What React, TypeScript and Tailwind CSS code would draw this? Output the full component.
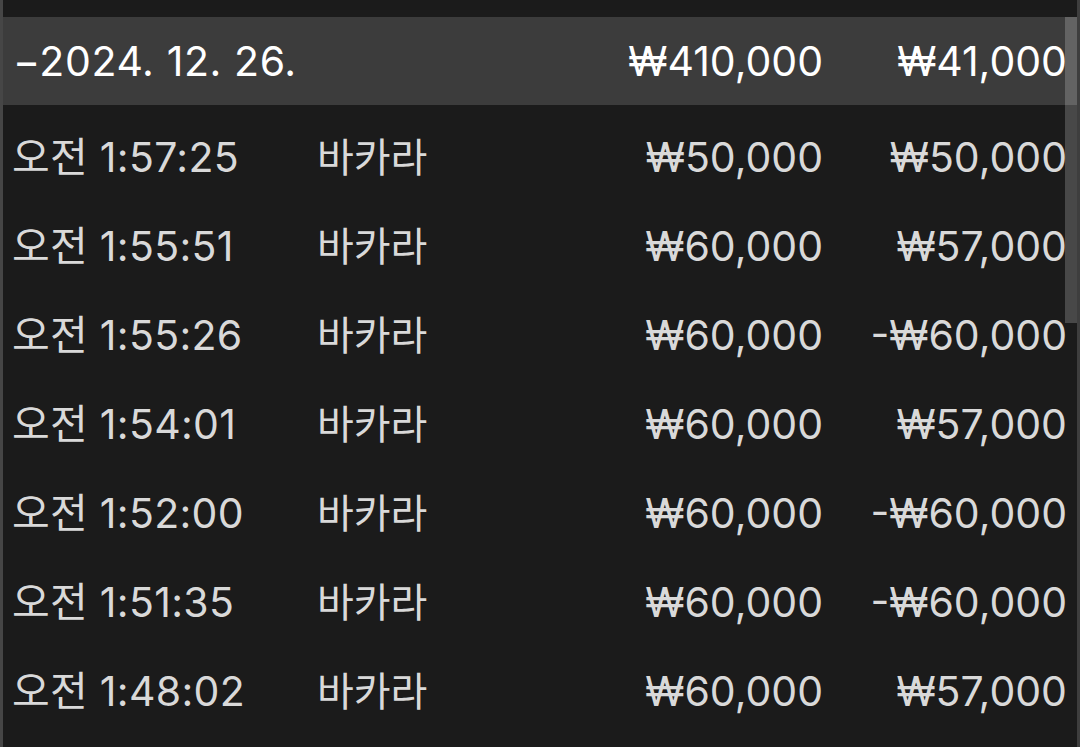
import React from "react";

const rows = [
  { t: "오전 1:57:25", a: "₩50,000", p: "₩50,000" },
  { t: "오전 1:55:51", a: "₩60,000", p: "₩57,000" },
  { t: "오전 1:55:26", a: "₩60,000", p: "-₩60,000" },
  { t: "오전 1:54:01", a: "₩60,000", p: "₩57,000" },
  { t: "오전 1:52:00", a: "₩60,000", p: "-₩60,000" },
  { t: "오전 1:51:35", a: "₩60,000", p: "-₩60,000" },
  { t: "오전 1:48:02", a: "₩60,000", p: "₩57,000" },
];

export default function App() {
  return (
    <div
      className="w-[1080px] h-[747px] bg-[#1b1b1b] flex overflow-hidden"
      style={{ fontFamily: '"Inter", "Noto Sans CJK KR", sans-serif' }}
    >
      <div className="w-[3px] bg-[#464646]" />
      <div className="relative flex-1 flex flex-col pt-[17px]">
        <div className="h-[88px] bg-[#3c3c3c] flex items-center pl-[10px] pr-[10px] text-white text-[41px] leading-none">
          <div className="flex-1 tracking-[0.6px]">−2024. 12. 26.</div>
          <div className="text-right pr-[1px]">₩410,000</div>
          <div className="w-[243px] text-right">₩41,000</div>
        </div>
        <div className="mt-[8px] flex flex-col">
          {rows.map((r, i) => (
            <div
              key={i}
              className="h-[89px] flex items-center pl-[9px] pr-[10px] text-[#d9d9d9] text-[41px] leading-none"
            >
              <div className="w-[305px] tracking-[0.3px]">{r.t}</div>
              <div className="flex-1 text-[40px]">바카라</div>
              <div className="text-right pr-[1px]">{r.a}</div>
              <div className="w-[243px] text-right">{r.p}</div>
            </div>
          ))}
        </div>
        <div className="absolute right-0 top-[17px] w-[12px] h-[306px] bg-white/20" />
      </div>
      <div className="w-[3px] bg-[#3e3e3e]" />
    </div>
  );
}
